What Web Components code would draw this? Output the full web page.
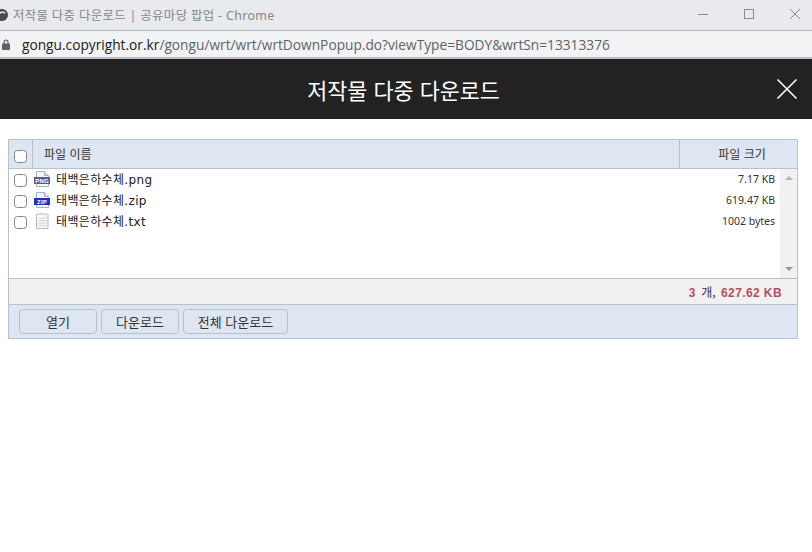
<!DOCTYPE html>
<html lang="ko">
<head>
<meta charset="utf-8">
<title>저작물 다중 다운로드</title>
<style>
  html, body { margin: 0; height: 100%; background: #fff; overflow: hidden; }
  body { font-family: "Noto Sans", "Noto Sans CJK KR", sans-serif; }
</style>
</head>
<body>
<chrome-bar></chrome-bar>
<popup-header>저작물 다중 다운로드</popup-header>
<file-panel>
  <file-row name="태백은하수체.png" size="7.17 KB" kind="png"></file-row>
  <file-row name="태백은하수체.zip" size="619.47 KB" kind="zip"></file-row>
  <file-row name="태백은하수체.txt" size="1002 bytes" kind="txt"></file-row>
</file-panel>
<script>
const KR = '"Noto Sans CJK KR", sans-serif'

customElements.define(
  'chrome-bar',
  class extends HTMLElement {
    constructor() {
      super()
      const root = this.attachShadow({ mode: 'open' })
      root.innerHTML = `<style>
          :host { display: block; height: 59px; background: #f1f3f4; color: #5f6368; }
          .top { display: flex; align-items: center; height: 30px; background: #e8eaed; border-bottom: 1px solid #b4b6b9; font: 12px "Noto Sans", ${KR}; color: #85878a; }
          .fav { margin-left: -4px; flex: none; }
          .title { margin-left: 5px; flex: 1; white-space: nowrap; font-size: 12.4px; letter-spacing: 0.36px; }
          .win { display: flex; margin-right: -6px; padding-bottom: 2px; }
          .win svg { display: block; }
          .win span { width: 46px; display: flex; justify-content: center; }
          .addr { display: flex; align-items: center; height: 26px; border-bottom: 2px solid #bcbec1; font: 13.72px "Open Sans", sans-serif; }
          .addr svg { margin-left: 2px; flex: none; }
          .addr div { margin-left: 12px; white-space: nowrap; }
          b { font-weight: 400; color: #202124; }
        </style>
        <div class="top">
          <svg class="fav" width="12" height="12" viewBox="0 0 12 12"><circle cx="6" cy="6" r="6" fill="#4a4a4a"/><path d="M3 5.5a3.4 3.4 0 0 1 6 -1" fill="none" stroke="#e8eaed" stroke-width="1.5"/></svg>
          <div class="title">저작물 다중 다운로드 | 공유마당 팝업 - Chrome</div>
          <div class="win">
            <span><svg width="12" height="12"><path d="M1 6.5h10" stroke="#8a8c8f"/></svg></span>
            <span><svg width="12" height="12"><rect x="1.5" y="1.5" width="9" height="9" fill="none" stroke="#8a8c8f"/></svg></span>
            <span><svg width="12" height="12"><path d="M1 1l10 10M11 1L1 11" stroke="#8a8c8f"/></svg></span>
          </div>
        </div>
        <div class="addr">
          <svg width="8" height="11" viewBox="0 0 8 11"><path d="M2 5V3.2a2 2 0 0 1 4 0V5" fill="none" stroke="#5f6368" stroke-width="1.2"/><rect y="4.5" width="8" height="6.5" rx="1" fill="#5f6368"/></svg>
          <div><b>gongu.copyright.or.kr</b>/gongu/wrt/wrt/wrtDownPopup.do?viewType=BODY&amp;wrtSn=13313376</div>
        </div>`
    }
  }
)

customElements.define(
  'popup-header',
  class extends HTMLElement {
    constructor() {
      super()
      const root = this.attachShadow({ mode: 'open' })
      root.innerHTML = `<style>
          :host { display: flex; position: relative; align-items: center; justify-content: center; box-sizing: border-box; height: 60px; padding-right: 5px; background: #222; color: #fff; font: 21.8px ${KR}; }
          svg { position: absolute; right: 14px; top: 19px; }
        </style>
        <slot></slot>
        <svg width="22" height="22"><path d="M1.5 1.5l19 19M20.5 1.5l-19 19" stroke="#fff" stroke-width="1.6"/></svg>`
    }
  }
)

customElements.define(
  'file-row',
  class extends HTMLElement {
    constructor() {
      super()
      const kind = this.getAttribute('kind')
      const icons = {
        png: { band: '#5b5a94', label: 'PNG' },
        zip: { band: '#1a35c4', label: 'ZIP' },
      }
      const icon = icons[kind]
      const badge = icon
        ? `<path d="M2.5.5h8l4 4v11h-12z" fill="#f4f6fa" stroke="#a9aeb8"/><path d="M10.5.5v4h4" fill="#dfe3ea" stroke="#a9aeb8"/><rect x="0" y="6" width="16" height="7" fill="${icon.band}"/><text x="8" y="11.8" text-anchor="middle" font-family="Liberation Sans" font-weight="700" font-size="6" letter-spacing="0.2" fill="#fff">${icon.label}</text>`
        : '<path d="M2.5 15.5v-14l1.5-1 1.5 1 1.5-1 1.5 1 1.5-1 1.5 1 1.5-1 1 1v14z" fill="#f6f7f8" stroke="#b4b8bd"/><path d="M4.5 5h8M4.5 7.5h8M4.5 10h8M4.5 12.5h8" stroke="#d4d6da"/>'
      const root = this.attachShadow({ mode: 'open' })
      root.innerHTML = `<style>
          :host { display: flex; align-items: center; height: 21px; }
          .box { width: 13px; height: 13px; box-sizing: border-box; margin: 1px 0 0 5px; border: 1px solid #858585; border-radius: 3.5px; background: #fff; flex: none; }
          svg { margin: -1px 0 0 7px; flex: none; }
          .name { margin: -2px 0 0 6px; flex: 1; font: 12px "DejaVu Sans", ${KR}; color: #222; letter-spacing: 0.35px; }
          .size { margin: -2px 5px 0 0; font: 10.5px "Noto Sans", sans-serif; color: #333; }
        </style>
        <span class="box"></span>
        <svg width="16" height="16" viewBox="0 0 16 16">${badge}</svg>
        <span class="name">${this.getAttribute('name')}</span>
        <span class="size">${this.getAttribute('size')}</span>`
    }
  }
)

customElements.define(
  'file-panel',
  class extends HTMLElement {
    constructor() {
      super()
      const root = this.attachShadow({ mode: 'open' })
      root.innerHTML = `<style>
          :host { display: block; width: 790px; box-sizing: border-box; margin: 20px 0 0 8px; border: 1px solid #b8c2cf; font: 12px ${KR}; color: #333; }
          .head { display: flex; height: 28px; background: #dee6f2; border-bottom: 1px solid #b8c2cf; line-height: 28px; }
          .check { width: 24px; border-right: 1px solid #b8c2cf; display: flex; align-items: center; padding-top: 5px; box-sizing: border-box; }
          .box { width: 13px; height: 13px; box-sizing: border-box; margin-left: 5px; border: 1px solid #858585; border-radius: 3.5px; background: #fff; }
          .fname { flex: 1; padding-left: 11px; }
          .fsize { width: 118px; box-sizing: border-box; padding-left: 7px; border-left: 1px solid #b8c2cf; text-align: center; }
          .body { display: flex; height: 109px; border-bottom: 1px solid #b8c2cf; }
          .rows { flex: 1; }
          .scroll { width: 17px; background: #f1f1f1; display: flex; flex-direction: column; justify-content: space-between; align-items: center; padding: 7px 0; box-sizing: border-box; }
          .up, .down { width: 0; height: 0; border-left: 4px solid transparent; border-right: 4px solid transparent; }
          .up { border-bottom: 4px solid #b5b5b5; }
          .down { border-top: 4px solid #9a9a9a; }
          .sum { height: 25px; line-height: 25px; background: #f1f1f1; border-bottom: 1px solid #b8c2cf; text-align: right; padding-right: 15px; word-spacing: 2px; }
          .sum b { font: 700 12px "Liberation Sans", sans-serif; color: #b4505f; letter-spacing: 0.4px; word-spacing: 0; }
          .acts { display: flex; gap: 4px; height: 33px; box-sizing: border-box; padding: 4px 10px; background: #dee6f2; }
          button { height: 25px; padding: 0; border: 1px solid #b8c2cf; border-radius: 4px; background: #dee6f2; font: 13px ${KR}; color: #333; }
          .a { width: 78px; } .b { width: 78px; } .c { width: 105px; }
        </style>
        <div class="head">
          <div class="check"><span class="box"></span></div>
          <div class="fname">파일 이름</div>
          <div class="fsize">파일 크기</div>
        </div>
        <div class="body">
          <div class="rows"><slot></slot></div>
          <div class="scroll"><i class="up"></i><i class="down"></i></div>
        </div>
        <div class="sum"><b>3</b> 개, <b>627.62 KB</b></div>
        <div class="acts">
          <button class="a">열기</button>
          <button class="b">다운로드</button>
          <button class="c">전체 다운로드</button>
        </div>`
    }
  }
)
</script>
</body>
</html>
